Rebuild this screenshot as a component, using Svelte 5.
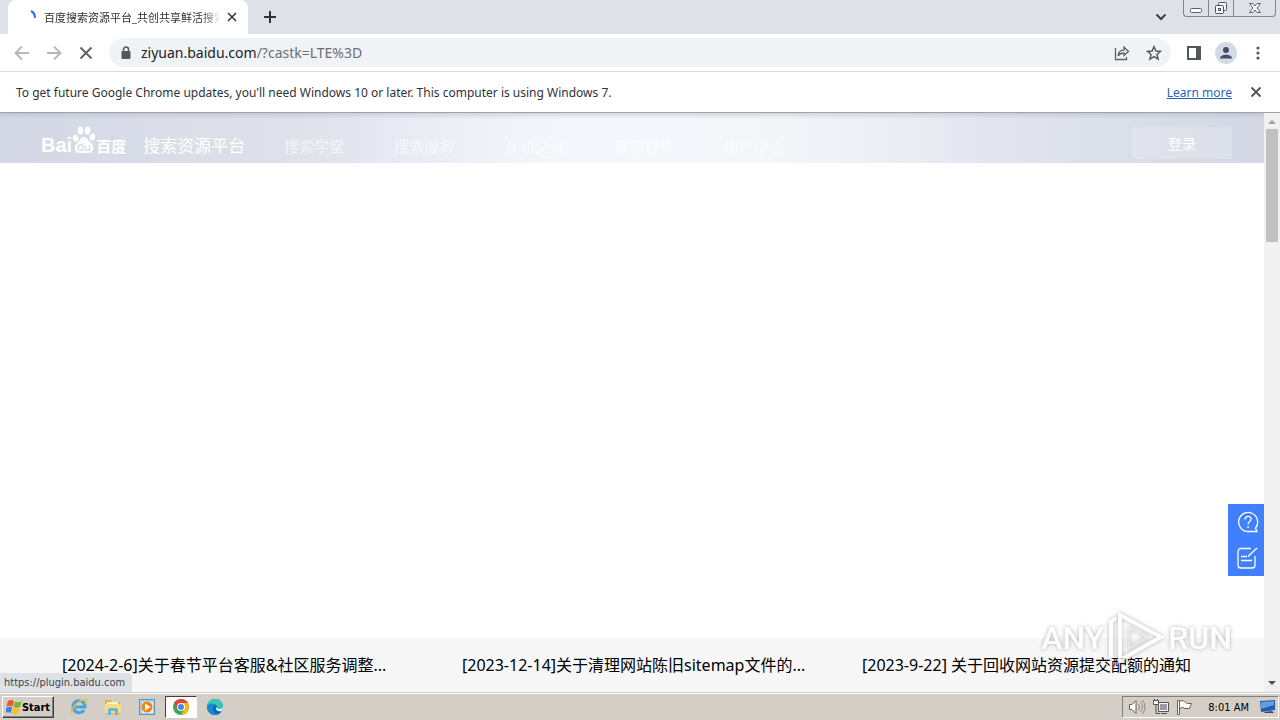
<script>
	const nav = ['搜索学堂', '搜索服务', '互动交流', '资源合作', '用户中心'];
	const news = [
		'[2024-2-6]关于春节平台客服&社区服务调整...',
		'[2023-12-14]关于清理网站陈旧sitemap文件的...',
		'[2023-9-22] 关于回收网站资源提交配额的通知'
	];
	let address = 'ziyuan.baidu.com/?castk=LTE%3D';
</script>

<div class="screen">
	<header class="tabs">
		<div class="tab">
			<svg class="spinner" width="16" height="16" viewBox="0 0 16 16">
				<path d="M9 2 Q13 4 13 9" fill="none" stroke="#1a73e8" stroke-width="2" />
			</svg>
			<span class="tab-title">百度搜索资源平台_共创共享鲜活搜索</span>
			<button class="tab-close" aria-label="Close tab">
				<svg width="10" height="10" viewBox="0 0 10 10"><path d="M1 1l8 8M9 1L1 9" stroke="#3c4043" stroke-width="1.7" /></svg>
			</button>
		</div>
		<button class="new-tab" aria-label="New tab">
			<svg width="12" height="12" viewBox="0 0 12 12"><path d="M6 0v12M0 6h12" stroke="#30343a" stroke-width="2" /></svg>
		</button>
		<button class="tab-search" aria-label="Search tabs">
			<svg width="12" height="8" viewBox="0 0 12 8"><path d="M1.500 1.500L6 6l4.500-4.500" fill="none" stroke="#3c4043" stroke-width="2" /></svg>
		</button>
		<div class="window-buttons">
			<button aria-label="Minimize">
				<svg width="14" height="14" viewBox="0 0 14 14"><rect x="1.500" y="7.500" width="11" height="4" rx="1" fill="#fff" stroke="#5b616c" /></svg>
			</button>
			<button aria-label="Restore">
				<svg width="14" height="14" viewBox="0 0 14 14" fill="#f5f6f8" stroke="#4c525d">
					<rect x="4.500" y="1.500" width="8" height="8" rx="1" />
					<rect x="1.500" y="4.500" width="8" height="8" rx="1" />
					<rect x="4.500" y="7.500" width="2" height="2" />
				</svg>
			</button>
			<button class="wide" aria-label="Close">
				<svg width="14" height="14" viewBox="0 0 14 14"><path d="M1.500 2.500h3.500l2 2.500 2-2.500h3.500L9 7l3.500 4.500H9L7 9l-2 2.500H1.500L5 7z" fill="#fff" stroke="#5b616c" /></svg>
			</button>
		</div>
	</header>

	<div class="toolbar">
		<button aria-label="Back">
			<svg width="16" height="16" viewBox="0 0 16 16"><path d="M15 8H2M8 1.500L1.500 8 8 14.500" fill="none" stroke="#b4b7bb" stroke-width="1.800" /></svg>
		</button>
		<button aria-label="Forward">
			<svg width="16" height="16" viewBox="0 0 16 16"><path d="M1 8h13M8 1.500L14.500 8 8 14.500" fill="none" stroke="#b4b7bb" stroke-width="1.800" /></svg>
		</button>
		<button aria-label="Stop">
			<svg width="16" height="16" viewBox="0 0 16 16"><path d="M2.500 2.500l11 11M13.500 2.500l-11 11" stroke="#5f6368" stroke-width="1.900" /></svg>
		</button>
		<div class="omnibox">
			<svg width="10" height="14" viewBox="0 0 10 14">
				<path d="M2.500 6V3.500a2.500 2.500 0 0 1 5 0V6" fill="none" stroke="#54585d" stroke-width="1.500" />
				<rect x="0.500" y="5" width="9" height="8" rx="1" fill="#54585d" />
			</svg>
			<div class="address">
				<input aria-label="Address" bind:value={address} />
				<span class="address-text" aria-hidden="true">{address.split('/')[0]}<i>/{address.split('/')[1]}</i></span>
			</div>
			<button aria-label="Share">
				<svg width="16" height="16" viewBox="0 0 16 16" fill="none" stroke="#5f6368" stroke-width="1.300">
					<path d="M1.500 3v11.500h11V12" />
					<path d="M4 11c.5-4 2.500-6 6-6V2l4.500 4.500L10 10.500V8c-3 0-4.500.8-6 3z" />
				</svg>
			</button>
			<button aria-label="Bookmark">
				<svg width="16" height="16" viewBox="0 0 16 16"><path d="M8 1.700l1.900 4.300 4.600.4-3.500 3.100 1.100 4.600L8 11.700l-4.100 2.400L5 9.500 1.500 6.400 6.100 6z" fill="none" stroke="#54585d" stroke-width="1.500" /></svg>
			</button>
		</div>
		<button aria-label="Side panel">
			<svg width="14" height="14" viewBox="0 0 14 14"><path d="M1 1h12v12H1z" fill="#fff" stroke="#54585d" stroke-width="2" /><path d="M9 1h4v12H9z" fill="#54585d" /></svg>
		</button>
		<button class="profile" aria-label="Profile">
			<svg width="22" height="22" viewBox="0 0 22 22"><circle cx="11" cy="11" r="11" fill="#d5dbe3" /><circle cx="11" cy="8" r="3" fill="#42506b" /><path d="M5 16.500c0-5 12-5 12 0z" fill="#42506b" /></svg>
		</button>
		<button class="menu" aria-label="Menu">
			<svg width="4" height="14" viewBox="0 0 4 14" fill="#54585d"><circle cx="2" cy="2" r="1.600" /><circle cx="2" cy="7" r="1.600" /><circle cx="2" cy="12" r="1.600" /></svg>
		</button>
	</div>

	<div class="infobar">
		<span>To get future Google Chrome updates, you'll need Windows 10 or later. This computer is using Windows 7.</span>
		<a href="#learn">Learn more</a>
		<button aria-label="Dismiss">
			<svg width="12" height="12" viewBox="0 0 12 12"><path d="M1.500 1.500l9 9M10.500 1.500l-9 9" stroke="#54585d" stroke-width="2" /></svg>
		</button>
	</div>

	<div class="view">
		<main class="page">
			<div class="site-header">
				<a class="brand" href="#home">
					<b>Bai</b>
					<svg width="24" height="28" viewBox="0 0 24 28" fill="#fff">
						<ellipse cx="3.500" cy="12" rx="2.700" ry="3.600" transform="rotate(-15 3.500 12)" />
						<ellipse cx="8.500" cy="4.500" rx="2.800" ry="4" />
						<ellipse cx="15.500" cy="4.500" rx="2.800" ry="4" transform="rotate(10 15.500 4.500)" />
						<ellipse cx="20.500" cy="11" rx="2.700" ry="3.600" transform="rotate(15 20.500 11)" />
						<path d="M12 11c3 0 4 3 6 5 3 3 4 5 3 8-1.500 4-5 3-9 3s-7.500 1-9-3c-1-3 0-5 3-8 2-2 3-5 6-5z" />
						<path d="M11 17v7H8.500a2 2 0 0 1 0-5H11M13.500 19v4q0 1 1.500 1h2.500v-5" fill="none" stroke="#d8dbe7" stroke-width="1.300" />
					</svg>
					<b class="cn">百度</b>
					<span>搜索资源平台</span>
				</a>
				<nav>
					{#each nav as item}
						<a href="#nav">{item}</a>
					{/each}
				</nav>
				<button class="login">登录</button>
			</div>
			<div class="banner"></div>
			<div class="news">
				<div class="news-list">
					{#each news as item}
						<a href="#news">{item}</a>
					{/each}
				</div>
			</div>
		</main>

		<div class="scrollbar">
			<svg width="8" height="4" viewBox="0 0 8 4"><path d="M0 4l4-4 4 4z" fill="#a3a3a3" /></svg>
			<div class="thumb"></div>
			<svg class="down" width="8" height="4" viewBox="0 0 8 4"><path d="M0 0l4 4 4-4z" fill="#505050" /></svg>
		</div>

		<div class="side-tools">
			<button aria-label="Help">
				<svg width="22" height="22" viewBox="0 0 22 22" fill="none" stroke="#fff" stroke-width="1.300">
					<path d="M20 20.500h-9A9.500 9.500 0 1 1 18.500 17z" />
					<path d="M8 8.500c0-4 6-4 6-.5 0 2.500-3 2.500-3 5.500M11 15v2" />
				</svg>
			</button>
			<button aria-label="Feedback">
				<svg width="22" height="22" viewBox="0 0 22 22" fill="none" stroke="#fff" stroke-width="1.300">
					<path d="M14 1.500H4a3 3 0 0 0-3 3V18a3 3 0 0 0 3 3h11a3 3 0 0 0 3-3V9M4 9.500h6M4 13.500h11M11 9.500l9-8.500" />
				</svg>
			</button>
		</div>

		<div class="watermark">
			<span>ANY</span>
			<svg width="58" height="54" viewBox="0 0 58 54" fill="none" stroke="#fff" stroke-width="4">
				<path d="M4 47V11l5-4" />
				<path d="M13 49V4l41 22z" />
				<path d="M22 17v20l18-11z" stroke="#e2e2e2" stroke-width="2" />
			</svg>
			<span>RUN</span>
		</div>
		<div class="status">https://plugin.baidu.com</div>
	</div>

	<footer class="taskbar">
		<button class="start">
			<svg width="16" height="16" viewBox="0 0 16 16">
				<path d="M2 2q3-2 6 0L6.500 7.500q-3-1.500-6 0z" fill="#e8592b" />
				<path d="M9 2.500q3 1.500 6.500 0L14 8q-3 1.500-6.500 0z" fill="#76b82d" />
				<path d="M.5 8.500q3-1.500 5.700 0L4.700 14Q2 12.500-1 14z" fill="#3d82d8" />
				<path d="M7.200 9q3 1.500 6.300 0L12 14.500q-3 1.500-6.300 0z" fill="#f6bf25" />
			</svg>
			Start
		</button>
		<button class="task" aria-label="Internet Explorer">
			<svg width="18" height="18" viewBox="0 0 18 18" fill="none">
				<path d="M14 12A6 6 0 1 1 15 9H5" stroke="#42a5df" stroke-width="3" />
				<path d="M2 15C-1 14 6 3 15 1.500c3 0 1.500 3 0 4.500" stroke="#e9bd35" stroke-width="1.500" />
			</svg>
		</button>
		<button class="task" aria-label="Explorer">
			<svg width="18" height="18" viewBox="0 0 18 18">
				<path d="M1 2h6l1 2h8v12H1z" fill="#dcb950" />
				<path d="M3 4h11v4H3z" fill="#fff6bb" /><path d="M1 6h16v9H1z" fill="#f4de86" />
				<path d="M4 17v-5q0-2 2-2h6q2 0 2 2v5h-3v-4H7v4z" fill="#69b5dc" />
			</svg>
		</button>
		<button class="task" aria-label="Media Player">
			<svg width="16" height="16" viewBox="0 0 16 16">
				<rect x="0.500" y="0.500" width="15" height="15" fill="#a9d0ed" stroke="#5d94be" />
				<rect x="3" y="3" width="11" height="11" fill="#e3effa" />
				<circle cx="8" cy="8" r="5.500" fill="#f28518" /><path d="M6 4.500v7L11.500 8z" fill="#fff" />
			</svg>
		</button>
		<button class="task active" aria-label="Chrome">
			<svg width="16" height="16" viewBox="0 0 16 16">
				<circle cx="8" cy="8" r="8" fill="#34a853" />
				<path d="M1.100 4A8 8 0 0 1 14.900 4L8 4.500 4.500 10z" fill="#ea4335" />
				<path d="M14.900 4A8 8 0 0 1 8 16l3.500-6L8 4z" fill="#fbbc05" />
				<circle cx="8" cy="8" r="4" fill="#fff" /><circle cx="8" cy="8" r="3" fill="#4285f4" />
			</svg>
		</button>
		<button class="task" aria-label="Edge">
			<svg width="16" height="16" viewBox="0 0 16 16">
				<circle cx="8" cy="8" r="8" fill="#0b67b8" />
				<path d="M0 8A8 8 0 0 1 16 7c0 4-4 4-6 3 1-3-1-5-4-5S1 6 0 8z" fill="#36c8b1" />
				<path d="M0 8c1-4 7-5 9-1-3-1-4 3-2 6 2 2 5 2 7 0-5 6-14 2-14-5z" fill="#1687d4" />
				<path d="M9 8c-1 3 2 5 6 4 0-1 1-2 1-4-2 3-5 2-6 1z" fill="#e3f2f3" />
			</svg>
		</button>
		<div class="tray">
			<svg width="18" height="16" viewBox="0 0 18 16">
				<path d="M1.500 5.500H4l4-4v13l-4-4H1.500z" fill="#fff" stroke="#66635d" />
				<path d="M10.500 5q2 3 0 6M12.500 3q4 5 0 10M14.500 1q5 7 0 14" fill="none" stroke="#8c8982" />
			</svg>
			<svg width="16" height="16" viewBox="0 0 16 16">
				<path d="M5.500 3.500h10v9h-10z" fill="#f4f4f4" stroke="#55534e" /><path d="M7 5h7v6H7z" fill="#9a9da0" />
				<path d="M.5 1.500h5v4h-5z" fill="#fff" stroke="#55534e" />
				<path d="M1.500 0v2M4.500 0v2M3 5.500v9h4M8 14.500h6" fill="none" stroke="#55534e" />
			</svg>
			<svg width="17" height="16" viewBox="0 0 17 16">
				<path d="M3.500 2.500q3-2 5 0t3 2h4l-2 5H9q-2-2-5.500 0z" fill="#fff" stroke="#66635d" />
				<path d="M1.500 1.500h2v14h-2z" fill="#fff" stroke="#66635d" />
			</svg>
			<time>8:01 AM</time>
			<svg width="16" height="14" viewBox="0 0 16 14">
				<path d="M0 1l15-1v10L1 12z" fill="#225eb0" /><path d="M1 2l13-1v4L1 9z" fill="#639dde" />
				<path d="M4 12l8-1 2 2H5z" fill="#34495e" />
			</svg>
		</div>
	</footer>
</div>

<style>
	:global(body) {
		margin: 0;
	}

	.screen {
		display: flex;
		flex-direction: column;
		height: 100vh;
		overflow: hidden;
		background: #fff;
		color: #303235;
		font-family: 'Noto Sans', 'Noto Sans CJK SC', sans-serif;
		font-size: 12px;
	}

	button {
		display: flex;
		align-items: center;
		justify-content: center;
		padding: 0;
		border: 0;
		background: none;
		color: inherit;
		font: inherit;
	}

	svg {
		display: block;
		flex-shrink: 0;
	}

	.tabs {
		display: flex;
		flex: 0 0 34px;
		background: #dee1e8;
		padding-left: 8px;
	}

	.tab {
		display: flex;
		align-items: center;
		box-sizing: border-box;
		width: 240px;
		padding: 0 10px 0 14px;
		border-radius: 8px 8px 0 0;
		background: #fff;
	}

	.tab-title {
		flex: 1;
		margin-left: 6px;
		overflow: hidden;
		white-space: nowrap;
		font-size: 11px;
		mask-image: linear-gradient(to right, #000 90%, transparent);
	}

	.tab-close {
		width: 12px;
		margin-left: 6px;
	}

	.new-tab {
		width: 28px;
		margin-left: 8px;
	}

	.tab-search {
		width: 28px;
		margin-left: auto;
	}

	.window-buttons {
		display: flex;
		height: 16px;
		margin: 0 4px 0 8px;
		border: 1px solid #81858f;
		border-top: 0;
		border-radius: 0 0 4px 4px;
	}

	.window-buttons button {
		width: 25px;
		border-right: 1px solid #81858f;
	}

	.window-buttons .wide {
		width: 41px;
		border: 0;
	}

	.toolbar {
		display: flex;
		align-items: center;
		flex: 0 0 37px;
		gap: 14px;
		padding: 0 20px 0 13px;
		border-bottom: 1px solid #dadce0;
	}

	.toolbar > button {
		width: 18px;
	}

	.toolbar .menu {
		width: 4px;
		margin-left: 7px;
	}

	.omnibox {
		display: flex;
		align-items: center;
		flex: 1;
		gap: 16px;
		height: 29px;
		padding: 0 9px 0 12px;
		border-radius: 15px;
		background: #f0f3f5;
	}

	.address {
		position: relative;
		flex: 1;
		margin-left: -6px;
		font-size: 14px;
		line-height: 20px;
	}

	.address input {
		display: block;
		width: 100%;
		height: 20px;
		padding: 0;
		border: 0;
		outline: 0;
		background: none;
		color: transparent;
		caret-color: #202124;
		font: inherit;
	}

	.address-text {
		position: absolute;
		top: 0;
		left: 0;
		color: #202124;
		pointer-events: none;
	}

	.address-text i {
		color: #6b6f74;
		font-style: normal;
	}

	.infobar {
		display: flex;
		align-items: center;
		flex: 0 0 40px;
		padding: 0 18px 0 16px;
		border-bottom: 1px solid #a0a2aa;
	}

	.infobar a {
		margin: 0 18px 0 auto;
		color: #1f65ba;
	}

	.view {
		position: relative;
		display: flex;
		flex: 1;
		min-height: 0;
	}

	.page {
		display: flex;
		flex: 1;
		flex-direction: column;
	}

	.site-header {
		display: flex;
		align-items: center;
		box-sizing: border-box;
		height: 50px;
		padding: 0 32px 0 41px;
		background: linear-gradient(#a8abb766, transparent 6px),
			linear-gradient(to right, #d3d7e5, #dfe2eb 24%, #e8ebf3 32%, #f4f8fc 45%, #f4f6fa 60%, #f0f1f6 67%, #e3e6ef 78%, #dbdfe8 88%, #d3d7e4);
	}

	.site-header a {
		color: #fff;
		text-decoration: none;
	}

	.brand {
		display: flex;
		align-items: flex-end;
		height: 28px;
		margin-top: 4px;
		line-height: 17px;
	}

	.brand b {
		font-family: 'Liberation Sans', sans-serif;
		font-size: 20px;
	}

	.brand .cn {
		font-family: 'Noto Sans CJK SC', sans-serif;
		font-size: 15px;
	}

	.brand span {
		margin-left: 17px;
		font-size: 17px;
	}

	nav {
		display: flex;
		gap: 50px;
		margin: 16px 0 0 39px;
		font-size: 15px;
		line-height: 20px;
		opacity: 0.6;
	}

	.login {
		width: 100px;
		height: 32px;
		margin: 10px 0 0 auto;
		background: #ffffff2e;
		color: #fff;
		font-size: 14px;
	}

	.banner {
		flex: 1;
	}

	.news {
		height: 54px;
		background: #f7f7f7;
	}

	.news-list {
		display: grid;
		grid-template-columns: repeat(3, 1fr);
		max-width: 1200px;
		margin: 0 auto;
	}

	.news a {
		padding-left: 30px;
		color: #000;
		font-size: 16px;
		line-height: 54px;
		text-decoration: none;
		white-space: nowrap;
	}

	.scrollbar {
		display: flex;
		align-items: center;
		flex-direction: column;
		flex: 0 0 16px;
		padding: 7px 0;
		box-sizing: border-box;
		background: #f1f1f1;
	}

	.thumb {
		width: 12px;
		height: 20%;
		margin-top: 5px;
		background: #c1c1c1;
	}

	.down {
		margin-top: auto;
	}

	.side-tools {
		position: absolute;
		right: 16px;
		bottom: 116px;
		width: 36px;
		background: #4080ff;
	}

	.side-tools button {
		width: 36px;
		height: 36px;
		padding-left: 3px;
	}

	.watermark {
		position: absolute;
		right: 48px;
		bottom: 27px;
		display: flex;
		align-items: center;
		gap: 3px;
		color: #fff;
		font-family: 'Roboto', sans-serif;
		font-size: 32px;
		font-weight: 500;
		line-height: 54px;
		filter: drop-shadow(0 0 2px #999);
		opacity: 0.75;
		pointer-events: none;
	}

	.status {
		position: absolute;
		bottom: 0;
		left: 0;
		padding: 0 7px 0 4px;
		border-radius: 0 4px 0 0;
		background: #dee1e6;
		color: #3f4247;
		font-family: 'DejaVu Sans Condensed', sans-serif;
		font-size: 11px;
		line-height: 19px;
	}

	.taskbar {
		display: flex;
		align-items: center;
		box-sizing: border-box;
		flex: 0 0 28px;
		padding: 1px 1px 0 2px;
		border-top: 1px solid #d4d0c8;
		background: #d4cec7;
		box-shadow: inset 0 1px #fff;
	}

	.start {
		box-sizing: border-box;
		width: 52px;
		height: 22px;
		margin-right: 9px;
		border: 1px solid;
		border-color: #fff #404040 #404040 #fff;
		box-shadow: inset -1px -1px #808080;
		color: #000;
		font-family: 'DejaVu Sans Condensed', sans-serif;
		font-size: 11px;
		font-weight: bold;
	}

	.task {
		box-sizing: border-box;
		width: 32px;
		height: 22px;
		margin-right: 2px;
	}

	.task.active {
		border: 1px solid;
		border-color: #404040 #fff #fff #404040;
		background: #fff;
	}

	.tray {
		display: flex;
		align-items: center;
		box-sizing: border-box;
		gap: 7px;
		height: 22px;
		margin-left: auto;
		padding: 0 2px 0 5px;
		border: 1px solid;
		border-color: #808080 #fff #fff #808080;
		color: #000;
	}

	.tray time {
		margin: 0 4px 0 8px;
		font-family: 'DejaVu Sans Condensed', sans-serif;
		font-size: 11px;
	}
</style>
